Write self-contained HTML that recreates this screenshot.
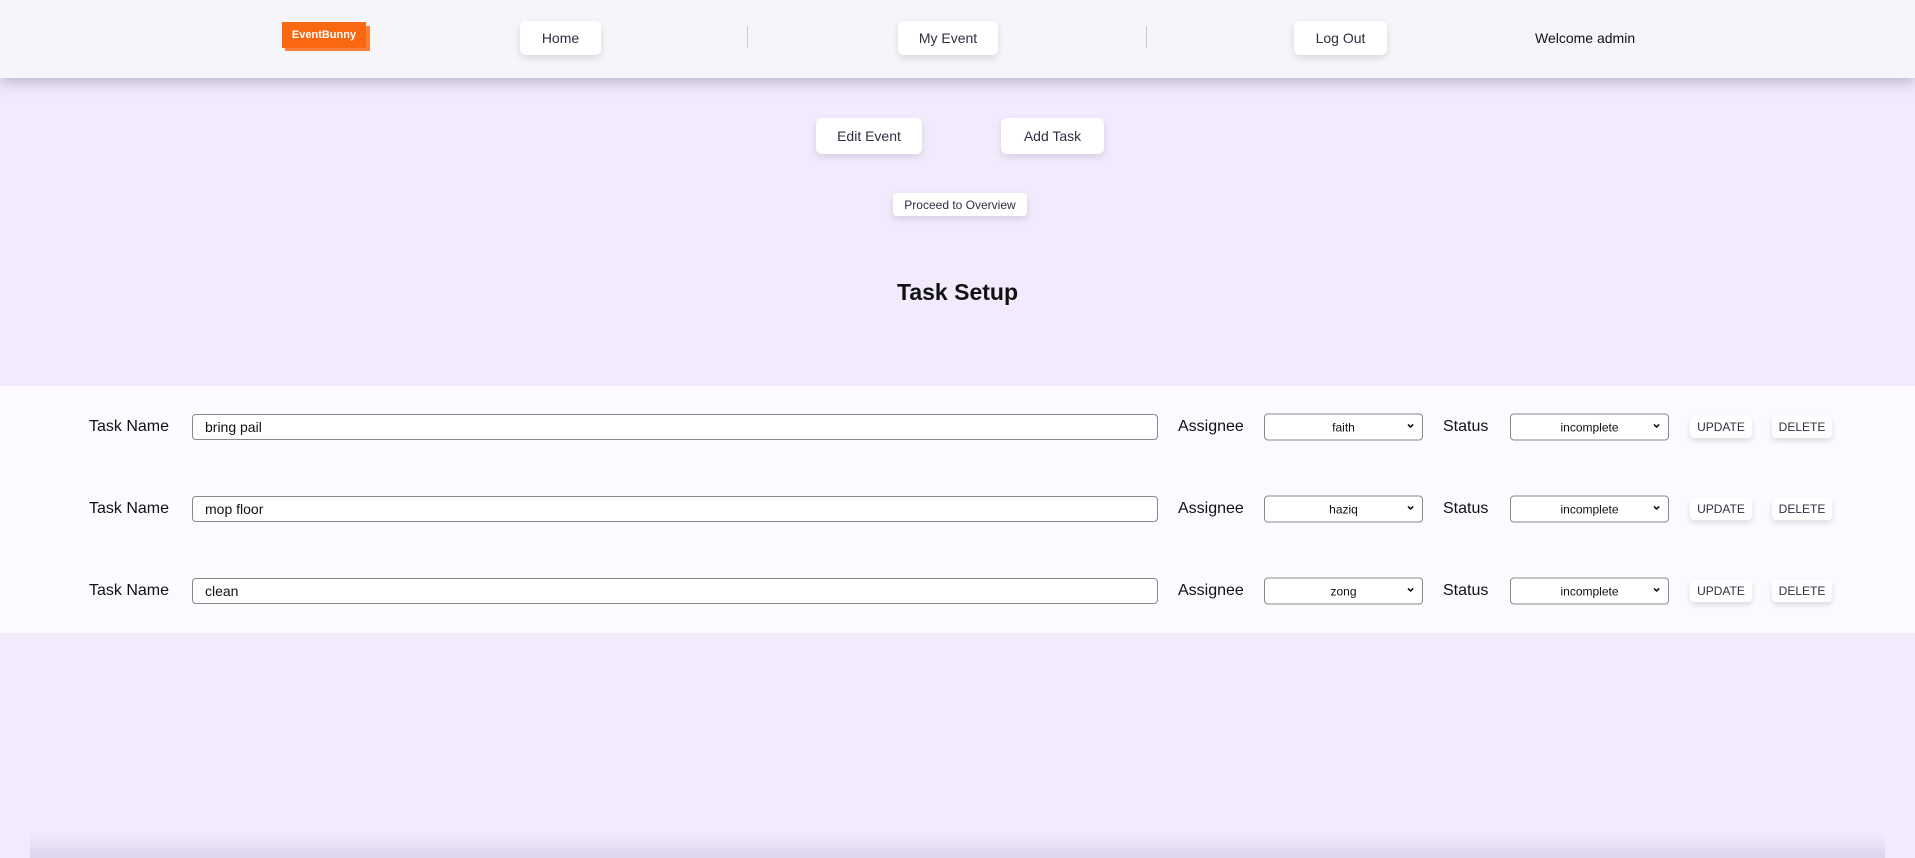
<!DOCTYPE html>
<html><head><style>
*{box-sizing:border-box;margin:0;padding:0}
body{width:1915px;height:858px;overflow:hidden;background:#f2ebfd;font-family:"Liberation Sans",sans-serif;position:relative;color:#111}
.nav{position:absolute;left:0;top:0;width:1915px;height:78px;background:#f6f5fa;box-shadow:0 4px 14px rgba(80,70,110,.35);z-index:2}
.btn{position:absolute;background:#fff;border-radius:6px;box-shadow:0 3px 8px rgba(0,0,0,.12);color:#2d3040;display:flex;align-items:center;justify-content:center;font-size:14px}
.div{position:absolute;top:26px;width:1px;height:22px;background:#ccc}
.logo{position:absolute;left:282px;top:22px;width:88px;height:29px}
.band{position:absolute;left:0;top:386px;width:1915px;height:247px;background:#fcfaff}
.lbl{position:absolute;font-size:16px;color:#111;transform:translateY(-50%)}
.inp{position:absolute;height:26px;border:1px solid #888;border-radius:4px;background:#fff;font-size:14px;padding-left:12px;display:flex;align-items:center;transform:translateY(-50%)}
.sel{position:absolute;height:27px;border:1px solid #888;border-radius:4px;background:#fff;font-size:12px;display:flex;align-items:center;justify-content:center;transform:translateY(-50%)}
.sel:after{content:"⌄";position:absolute;right:6px;top:1px;font-size:13px;font-weight:bold}
.sb{position:absolute;height:22px;font-size:12px;transform:translateY(-50%);background:#fff;border-radius:4px;box-shadow:0 3px 6px rgba(0,0,0,.12);display:flex;align-items:center;justify-content:center;color:#2d3040}
.bot{position:absolute;left:30px;right:30px;bottom:0;height:26px;background:linear-gradient(rgba(200,190,220,0),rgba(205,195,225,.55))}
</style></head><body>
<div class="nav">
 <div class="logo"><div style="position:absolute;left:3px;top:4px;width:85px;height:25px;background:#fb7f36"></div><div style="position:absolute;left:0;top:0;width:84px;height:26px;background:#f96711;color:#fff;font-size:11px;font-weight:bold;display:flex;align-items:center;justify-content:center">EventBunny</div></div>
 <div class="btn" style="left:520px;top:21px;width:81px;height:34px">Home</div>
 <div class="div" style="left:747px"></div>
 <div class="btn" style="left:898px;top:21px;width:100px;height:34px">My Event</div>
 <div class="div" style="left:1146px"></div>
 <div class="btn" style="left:1294px;top:21px;width:93px;height:34px">Log Out</div>
 <div style="position:absolute;left:1535px;top:30px;font-size:14px">Welcome admin</div>
</div>
<div class="btn" style="left:816px;top:118px;width:106px;height:36px">Edit Event</div>
<div class="btn" style="left:1001px;top:118px;width:103px;height:36px">Add Task</div>
<div class="btn" style="left:893px;top:193px;width:134px;height:23px;font-size:12px;border-radius:4px">Proceed to Overview</div>
<div style="position:absolute;left:0;width:1915px;top:279px;text-align:center;font-size:23px;font-weight:bold">Task Setup</div>
<div class="band"></div>
<div class="lbl" style="left:89px;top:427px">Task Name</div><div class="inp" style="left:192px;width:966px;top:427px">bring pail</div>
<div class="lbl" style="left:1178px;top:427px">Assignee</div><div class="sel" style="left:1264px;width:159px;top:427px">faith</div>
<div class="lbl" style="left:1443px;top:427px">Status</div><div class="sel" style="left:1510px;width:159px;top:427px">incomplete</div>
<div class="sb" style="left:1690px;width:62px;top:427px">UPDATE</div><div class="sb" style="left:1772px;width:60px;top:427px">DELETE</div>
<div class="lbl" style="left:89px;top:509px">Task Name</div><div class="inp" style="left:192px;width:966px;top:509px">mop floor</div>
<div class="lbl" style="left:1178px;top:509px">Assignee</div><div class="sel" style="left:1264px;width:159px;top:509px">haziq</div>
<div class="lbl" style="left:1443px;top:509px">Status</div><div class="sel" style="left:1510px;width:159px;top:509px">incomplete</div>
<div class="sb" style="left:1690px;width:62px;top:509px">UPDATE</div><div class="sb" style="left:1772px;width:60px;top:509px">DELETE</div>
<div class="lbl" style="left:89px;top:591px">Task Name</div><div class="inp" style="left:192px;width:966px;top:591px">clean</div>
<div class="lbl" style="left:1178px;top:591px">Assignee</div><div class="sel" style="left:1264px;width:159px;top:591px">zong</div>
<div class="lbl" style="left:1443px;top:591px">Status</div><div class="sel" style="left:1510px;width:159px;top:591px">incomplete</div>
<div class="sb" style="left:1690px;width:62px;top:591px">UPDATE</div><div class="sb" style="left:1772px;width:60px;top:591px">DELETE</div>
<div class="bot"></div>
</body></html>
